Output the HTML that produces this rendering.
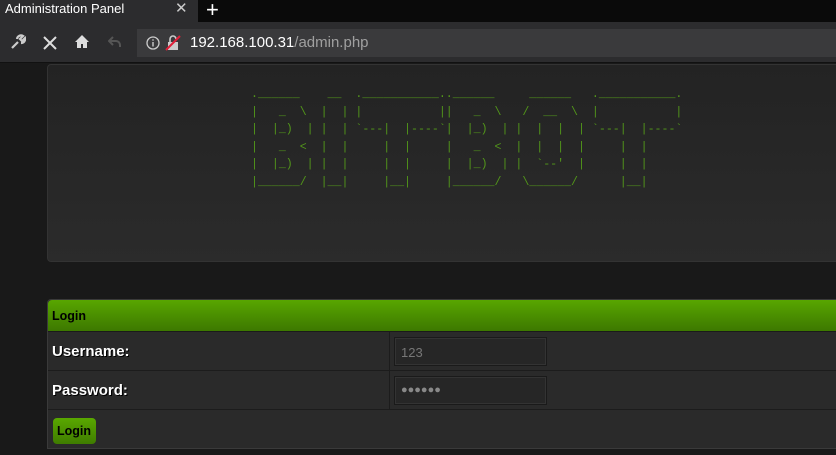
<!DOCTYPE html>
<html><head><style>
*{margin:0;padding:0;box-sizing:border-box}
body{width:836px;height:455px;overflow:hidden;background:#191919;font-family:"Liberation Sans",sans-serif;position:relative}
.tabbar{position:absolute;left:0;top:0;width:836px;height:22px;background:#0a0a0a}
.tab{position:absolute;left:0;top:0;width:198px;height:23px;background:#2c2c2e;color:#fff;font-size:13px;line-height:18px;padding-left:5px}
.tab .x{position:absolute;left:175px;top:0;color:#ccc;font-size:15px}
.plus{position:absolute;left:206px;top:-3px;color:#fff;font-size:22px}
.tool{position:absolute;left:0;top:22px;width:836px;height:41px;background:#2c2c2e;border-bottom:1px solid #111}
.url{position:absolute;left:137px;top:7px;width:699px;height:28px;background:#3a3a3c}
.url .t{position:absolute;left:53px;top:5px;font-size:15px;color:#fff}
.url .t span{color:#a0a0a0}
.panel{position:absolute;left:47px;top:64px;width:800px;height:198px;background:linear-gradient(#232323,#2b2b2b);border:1px solid #333;border-radius:4px}
pre{position:absolute;left:251px;top:86px;font-family:"Liberation Mono",monospace;font-size:11.6px;line-height:17.6px;color:#52961a}
.login{position:absolute;left:47px;top:299px;width:800px;height:150px;border:1px solid #3a3a3a;background:#2a2a2a;border-radius:4px 0 0 0}
.hd{height:32px;background:linear-gradient(#58a600,#3d7800);border-bottom:1px solid #1a1a1a;font-weight:bold;font-size:12.5px;color:#000;padding:9px 0 0 4px;border-radius:4px 0 0 0}
.row{position:absolute;left:0;width:800px;height:39px;border-bottom:1px solid #1c1c1c}
.row .l{position:absolute;left:4px;top:11px;color:#fff;font-weight:bold;font-size:15px;text-shadow:1px 1px 0 #000}
.row .d{position:absolute;left:341px;top:0;width:1px;height:38px;background:#1c1c1c}
.inp{position:absolute;left:346px;top:5px;width:153px;height:29px;background:#262626;border:1px solid #1a1a1a;box-shadow:inset 0 0 0 1px #333;color:#777;font-size:13px;padding:7px 0 0 6px}
.btn{position:absolute;left:5px;top:118px;width:43px;height:26px;background:linear-gradient(#5aa800,#3f7c00);border-radius:4px;font-weight:bold;font-size:12.5px;color:#000;padding:6px 0 0 4px}
</style></head><body>
<div class="tabbar"><div class="tab">Administration Panel<span class="x">✕</span></div><div class="plus">+</div></div>
<div class="tool">
<svg style="position:absolute;left:10px;top:12px" width="16" height="16" viewBox="0 0 16 16"><path d="M2 14 L8 8 M7 5 a4 4 0 0 1 6 -3 l-3 3 2 2 3 -3 a4 4 0 0 1 -4 5" stroke="#ccc" stroke-width="2.2" fill="none"/></svg>
<svg style="position:absolute;left:43px;top:14px" width="14" height="14"><path d="M1 1L13 13M13 1L1 13" stroke="#ddd" stroke-width="2"/></svg>
<svg style="position:absolute;left:74px;top:12px" width="16" height="16"><path d="M8 1L1 8h2v6h4v-4h2v4h4V8h2z" fill="#ddd"/></svg>
<svg style="position:absolute;left:108px;top:14px" width="14" height="12"><path d="M5 1L1 5l4 4M1 5h7a4 4 0 0 1 4 4v2" stroke="#555" stroke-width="2" fill="none"/></svg>
<div class="url">
<svg style="position:absolute;left:9px;top:7px" width="14" height="14"><circle cx="7" cy="7" r="6" stroke="#ccc" stroke-width="1.3" fill="none"/><rect x="6.3" y="6" width="1.4" height="4.5" fill="#ccc"/><rect x="6.3" y="3.3" width="1.4" height="1.4" fill="#ccc"/></svg>
<svg style="position:absolute;left:28px;top:6px" width="16" height="16"><rect x="3" y="7" width="10" height="8" fill="#ccc"/><path d="M5 7V4a3 3 0 0 1 6 0" stroke="#ccc" stroke-width="1.6" fill="none"/><path d="M1 15L15 1" stroke="#e0203a" stroke-width="2"/></svg>
<div class="t">192.168.100.31<span>/admin.php</span></div></div>
</div>
<div class="panel"></div>
<pre>.______    __  .___________..______     ______   .___________.
|   _  \  |  | |           ||   _  \   /  __  \  |           |
|  |_)  | |  | `---|  |----`|  |_)  | |  |  |  | `---|  |----`
|   _  <  |  |     |  |     |   _  <  |  |  |  |     |  |
|  |_)  | |  |     |  |     |  |_)  | |  `--'  |     |  |
|______/  |__|     |__|     |______/   \______/      |__|</pre>
<div class="login">
<div class="hd">Login</div>
<div class="row" style="top:32px"><div class="l">Username:</div><div class="d"></div><div class="inp">123</div></div>
<div class="row" style="top:71px"><div class="l">Password:</div><div class="d"></div><div class="inp" style="color:#888;font-size:11px;padding-top:7px">●●●●●●</div></div>
<div class="btn">Login</div>
</div>
</body></html>
